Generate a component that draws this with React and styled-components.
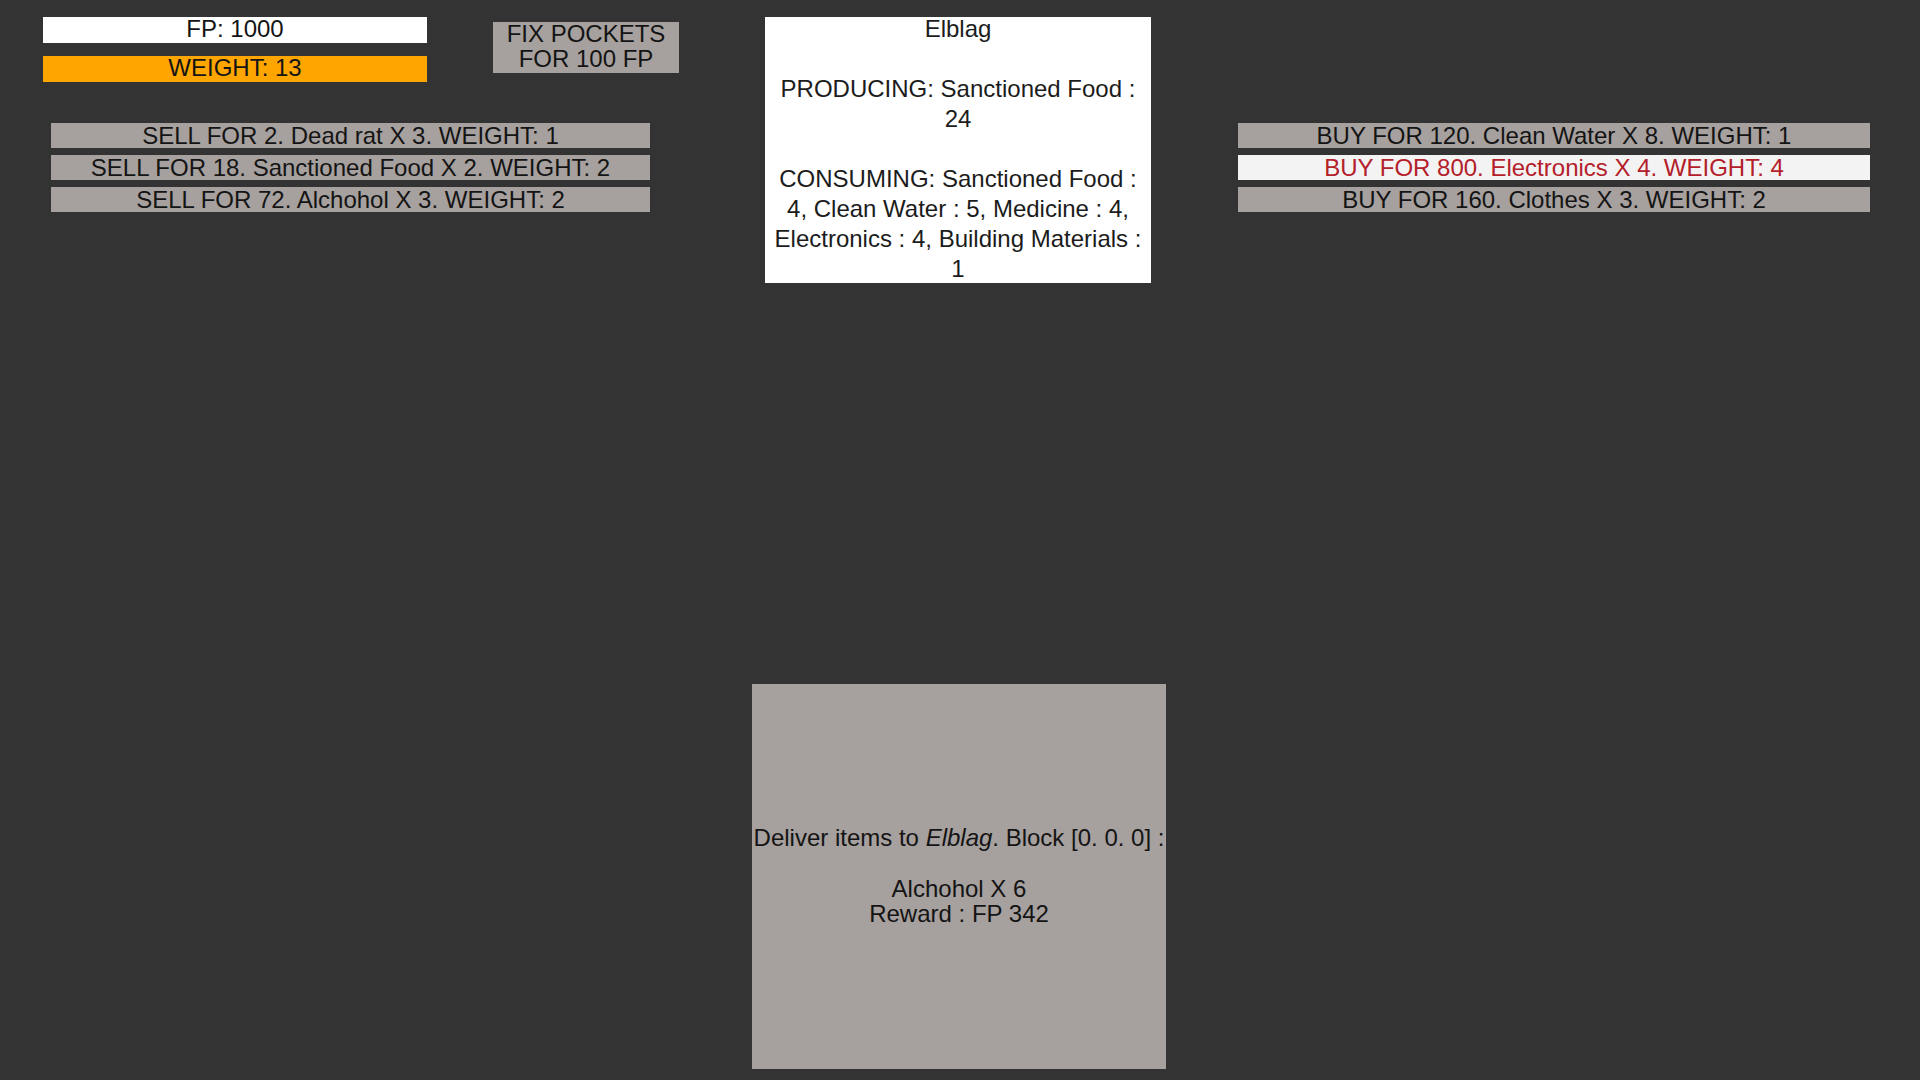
import React from 'react';
import styled, { createGlobalStyle } from 'styled-components';

const GlobalStyle = createGlobalStyle`
  html, body {
    margin: 0;
    padding: 0;
    background: #333333;
  }
  body {
    font-family: "Liberation Sans", Arial, sans-serif;
  }
`;

const Page = styled.div`
  width: 1920px;
  height: 1080px;
  background: #333333;
  padding-top: 17px;
  box-sizing: border-box;
  overflow: hidden;
  font-size: 24px;
  color: #141414;
`;

const TopArea = styled.div`
  display: grid;
  grid-template-columns: 765px 386px 1fr;
  align-items: start;
`;

const LeftPanel = styled.div`
  padding-left: 43px;
  display: flex;
  flex-direction: column;
`;

const Header = styled.div`
  display: flex;
  align-items: flex-start;
`;

const Stats = styled.div`
  display: flex;
  flex-direction: column;
  gap: 13px;
  width: 384px;
`;

const StatBar = styled.div`
  height: ${(p) => p.h}px;
  line-height: ${(p) => p.h - 2}px;
  background: ${(p) => p.bg};
  text-align: center;
  white-space: nowrap;
`;

const FixButton = styled.div`
  margin-left: 66px;
  margin-top: 5px;
  width: 186px;
  height: 51px;
  padding-bottom: 3px;
  box-sizing: border-box;
  background: #a6a09e;
  display: flex;
  flex-direction: column;
  justify-content: center;
  align-items: center;
  line-height: 25px;
  text-align: center;
`;

const TradeList = styled.div`
  display: flex;
  flex-direction: column;
  gap: 7px;
  width: ${(p) => p.w}px;
  margin-top: ${(p) => p.top}px;
  margin-left: ${(p) => p.left}px;
`;

const TradeRow = styled.div`
  height: 25px;
  line-height: 25px;
  background: ${(p) => (p.active ? '#f3f3f3' : '#a6a09e')};
  color: ${(p) => (p.active ? '#b3202a' : '#141414')};
  text-align: center;
  white-space: nowrap;
`;

const TownBox = styled.div`
  background: #ffffff;
  height: 266px;
  padding: 0 6px;
  box-sizing: border-box;
  text-align: center;
  line-height: 30px;
  color: #1c1c1c;
  overflow: hidden;
`;

const TownText = styled.div`
  margin-top: -3px;
`;

const Gap = styled.div`
  height: 30px;
`;

const RightPanel = styled.div`
  padding-left: 87px;
`;

const Delivery = styled.div`
  margin: 401px 0 0 752px;
  width: 414px;
  height: 385px;
  background: #a6a09e;
  display: flex;
  flex-direction: column;
  justify-content: center;
  align-items: center;
  line-height: 25.5px;
  padding-bottom: 2px;
  box-sizing: border-box;
  white-space: nowrap;
`;

const Spacer = styled.div`
  height: 25.5px;
`;

const sells = [
  'SELL FOR 2. Dead rat X 3. WEIGHT: 1',
  'SELL FOR 18. Sanctioned Food X 2. WEIGHT: 2',
  'SELL FOR 72. Alchohol X 3. WEIGHT: 2',
];

const buys = [
  { text: 'BUY FOR 120. Clean Water X 8. WEIGHT: 1' },
  { text: 'BUY FOR 800. Electronics X 4. WEIGHT: 4', active: true },
  { text: 'BUY FOR 160. Clothes X 3. WEIGHT: 2' },
];

export default function App() {
  return (
    <Page>
      <GlobalStyle />
      <TopArea>
        <LeftPanel>
          <Header>
            <Stats>
              <StatBar h={26} bg="#ffffff">FP: 1000</StatBar>
              <StatBar h={26} bg="#ffa500">WEIGHT: 13</StatBar>
            </Stats>
            <FixButton>
              <div>FIX POCKETS</div>
              <div>FOR 100 FP</div>
            </FixButton>
          </Header>
          <TradeList w={599} top={41} left={8}>
            {sells.map((s) => (
              <TradeRow key={s}>{s}</TradeRow>
            ))}
          </TradeList>
        </LeftPanel>

        <TownBox>
          <TownText>
            <div>Elblag</div>
            <Gap />
            <div>PRODUCING: Sanctioned Food : 24</div>
            <Gap />
            <div>
              CONSUMING: Sanctioned Food : 4, Clean Water : 5, Medicine : 4, Electronics : 4, Building Materials : 1
            </div>
          </TownText>
        </TownBox>

        <RightPanel>
          <TradeList w={632} top={106} left={0}>
            {buys.map((b) => (
              <TradeRow key={b.text} active={b.active}>
                {b.text}
              </TradeRow>
            ))}
          </TradeList>
        </RightPanel>
      </TopArea>

      <Delivery>
        <div>
          Deliver items to <i>Elblag</i>. Block [0. 0. 0] :
        </div>
        <Spacer />
        <div>Alchohol X 6</div>
        <div>Reward : FP 342</div>
      </Delivery>
    </Page>
  );
}
